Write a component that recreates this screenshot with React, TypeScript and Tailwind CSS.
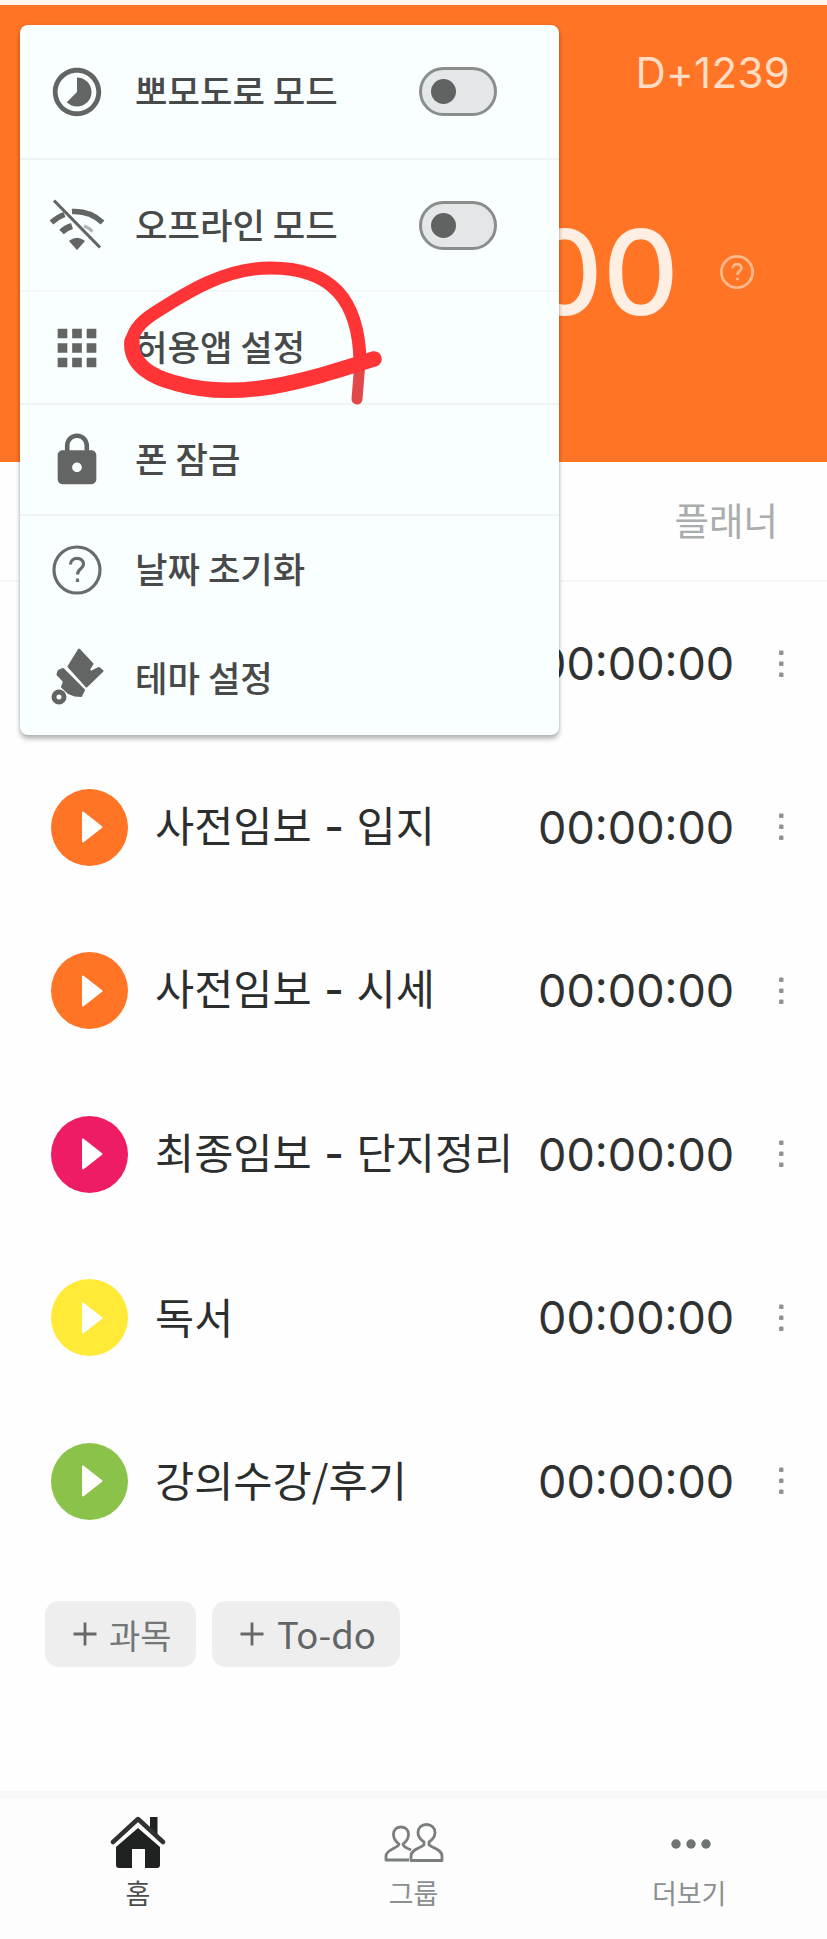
import React from "react";
import { MdApps, MdLock, MdTimelapse } from "react-icons/md";

const KR = "font-['Noto_Sans_CJK_KR',sans-serif]";
const NUM = "font-['Inter',sans-serif]";

const subjects = [
  { name: "", color: "bg-[#ff7425]" },
  { name: "사전임보 - 입지", color: "bg-[#ff7425]" },
  { name: "사전임보 - 시세", color: "bg-[#ff7425]" },
  { name: "최종임보 - 단지정리", color: "bg-[#ed1c64]" },
  { name: "독서", color: "bg-[#ffeb37]" },
  { name: "강의수강/후기", color: "bg-[#8bc24a]" },
];

function WifiOff() {
  return (
    <svg width="56" height="52" viewBox="0 0 56 52" fill="none" stroke="#636565">
      <path d="M2.500 23.500 Q8.500 18 15.500 15.500" strokeWidth="5.500" />
      <path d="M23 12.500 Q41 11.500 53.500 23.500" strokeWidth="5.500" />
      <path d="M12.500 33 Q16.500 29 23 27" strokeWidth="6.500" />
      <path d="M35 27 Q40 28.500 43.500 32.500" strokeWidth="3" opacity=".5" />
      <path d="M21 42 Q28 37 35 42 L28 50 Z" fill="#636565" strokeWidth="1.500" strokeLinejoin="round" />
      <path d="M5 1.500 L51 48.500" strokeWidth="3.200" />
    </svg>
  );
}

function Brush() {
  return (
    <svg width="56" height="58" viewBox="0 0 56 58" fill="#636565" stroke="#636565" strokeWidth="2" strokeLinejoin="round" className="relative -top-[2px]">
      <path d="M30 2.500 L43.500 17 L40 22.500 L42 25 L50 21 L53.500 24 L37.500 39.500 L19.500 19.500 Z" />
      <path d="M9.500 24 L14 22 L35 43 L32 49 L26 48.500 L19.500 46 L13 40 L15 34.500 L8.500 27.500 Z" />
      <circle cx="10" cy="50" r="5" fill="none" strokeWidth="5" />
    </svg>
  );
}

function Help({ size, stroke, className }: { size: number; stroke: number; className: string }) {
  return (
    <svg width={size} height={size} viewBox="0 0 50 50" fill="none" stroke="currentColor" strokeWidth={stroke} className={className}>
      <circle cx="25" cy="25" r="23" />
      <path d="M18.500 19.500 C18.500 11.500 31.500 11.500 31.500 19 C31.500 24 25.500 23.500 25.500 29.500" />
      <path d="M25.500 33.500 V37" />
    </svg>
  );
}

function Toggle() {
  return (
    <div className="mr-[62px] flex h-[49px] w-[78px] items-center rounded-full border-[3px] border-[#8b8d8d] bg-[#e4e7e7] pl-[9px]">
      <div className="size-[25px] rounded-full bg-[#616262]" />
    </div>
  );
}

function MenuRow({ icon, label, toggle, className }: { icon: React.ReactNode; label: string; toggle?: boolean; className: string }) {
  return (
    <div className={`flex items-center ${className}`}>
      <div className="ml-[20px] flex w-[74px] justify-center">{icon}</div>
      <div className="mb-[3px] ml-[21px] flex-1 whitespace-nowrap text-[35.300px] font-medium leading-none text-[#484a4a]">{label}</div>
      {toggle && <Toggle />}
    </div>
  );
}

function Menu() {
  return (
    <div className="absolute left-[20px] top-[25px] flex h-[710px] w-[539px] flex-col rounded-[8px] bg-[#f9fefe] shadow-[0_4px_5px_rgba(0,0,0,0.28),0_0_3px_rgba(0,0,0,0.12)]">
      <MenuRow icon={<MdTimelapse size={58} color="#636565" />} label="뽀모도로 모드" toggle className="h-[135px] border-b-2 border-[#f0f3f4]" />
      <MenuRow icon={<WifiOff />} label="오프라인 모드" toggle className="h-[132px] border-b-2 border-[#f4f7f8]" />
      <MenuRow icon={<MdApps size={58} color="#636565" />} label="허용앱 설정" className="h-[113px] border-b-2 border-[#f0f3f4]" />
      <MenuRow icon={<MdLock size={58} color="#636565" />} label="폰 잠금" className="h-[111px] border-b-2 border-[#f0f3f4]" />
      <MenuRow icon={<Help size={50} stroke={3.2} className="text-[#6a6c6c]" />} label="날짜 초기화" className="h-[107px]" />
      <MenuRow icon={<Brush />} label="테마 설정" className="h-[110px]" />
    </div>
  );
}

function Scribble() {
  return (
    <svg className="absolute left-[110px] top-[250px]" width="290" height="170" viewBox="110 250 290 170" fill="none" stroke="#ff3437" strokeLinecap="round" strokeLinejoin="round">
      <path d="M357 399 L360 362" stroke="#e2474a" strokeWidth="11" />
      <path d="M360 362 C359 300 332 268 270 268 C225 268 187 292 153 314 C125 332 126 356 146 371" strokeWidth="13" />
      <path d="M132 341 C130 365 152 377 175 383 C240 402 305 381 374 359" strokeWidth="15.500" />
    </svg>
  );
}

function Play({ color }: { color: string }) {
  return (
    <div className={`flex size-[77px] shrink-0 items-center justify-center rounded-full ${color}`}>
      <svg width="25" height="36" viewBox="0 0 25 36" className="ml-[6px]">
        <path d="M3 3.500 L21.500 18 L3 32.500 Z" fill="#fff" stroke="#fff" strokeWidth="2" strokeLinejoin="round" />
      </svg>
    </div>
  );
}

function SubjectRow({ name, color }: { name: string; color: string }) {
  return (
    <div className="flex h-[163.500px] items-center pl-[51px]">
      <Play color={color} />
      <div className="mb-[3px] ml-[27px] w-[383px] whitespace-nowrap text-[42.600px] leading-none text-[#2c2e2e] [word-spacing:3px]">
        {name.split("-").map((part, i) => (
          <React.Fragment key={i}>
            {i > 0 && <span className={`font-medium ${NUM}`}>-</span>}
            {part}
          </React.Fragment>
        ))}
      </div>
      <div className={`w-[243px] whitespace-nowrap text-[45px] leading-none text-[#303232] ${NUM}`}>00:00:00</div>
      <svg width="5" height="28" viewBox="0 0 5 28" className="-ml-[2px]" fill="#909393">
        <rect x="0" y="0.500" width="4.500" height="4.500" rx="1" />
        <rect x="0" y="11.500" width="4.500" height="4.500" rx="1" />
        <rect x="0" y="22.500" width="4.500" height="4.500" rx="1" />
      </svg>
    </div>
  );
}

function Plus() {
  return (
    <svg width="24" height="24" viewBox="0 0 24 24" stroke="#666868" strokeWidth="2.800">
      <path d="M0.500 12 H23.500 M12 0.500 V23.500" />
    </svg>
  );
}

function House() {
  return (
    <svg width="56" height="54" viewBox="0 0 56 54" fill="#202222">
      <path d="M40 2 H47.500 V20 L40 13 Z" />
      <path d="M3 27 L28 4 L53 27" fill="none" stroke="#303232" strokeWidth="4.500" strokeLinejoin="round" strokeLinecap="round" />
      <path d="M28 13 L50 32 V50 Q50 53 47 53 H35 V34 H22 V53 H9 Q6 53 6 50 V32 Z" />
    </svg>
  );
}

function Group() {
  return (
    <svg width="60" height="42" viewBox="0 0 60 42" fill="none" stroke="#7b7e7e" strokeWidth="2.800" strokeLinejoin="round" className="mt-[3px]">
      <path d="M27 27 C24 25 19 24.500 19 21 C23 18 24.500 15 24.500 11.500 C24.500 6.500 21 4 17 4 C13 4 9.500 6.500 9.500 11.500 C9.500 15 11 18 15 21 C15 25 2 26 2 33 V37 H25" />
      <path d="M42.500 1.500 C47.500 1.500 51 5 51 9.500 C51 14 48 17 45 19 V21.500 C47 25 58 26 58 33 V37.500 H27 V33 C27 26 38 25 40 21.500 V19 C37 17 34 14 34 9.500 C34 5 37.500 1.500 42.500 1.500 Z" />
    </svg>
  );
}

function NavItem({ icon, label, className }: { icon: React.ReactNode; label: string; className: string }) {
  return (
    <div className="flex flex-1 flex-col items-center">
      <div className="mt-[14px] flex h-[58px] items-center">{icon}</div>
      <div className={`mt-[8px] text-[27px] leading-none ${className}`}>{label}</div>
    </div>
  );
}

export default function App() {
  return (
    <div className={`relative flex h-[1939px] w-[827px] flex-col overflow-hidden bg-[#fefefe] ${KR}`}>
      <header className="flex h-[462px] flex-col items-end border-t-[5px] border-[#fff5ea] bg-[#ff7425]">
        <div className={`mr-[37px] mt-[47px] text-[42px] leading-none tracking-[0.300px] text-[#ffdcc4] ${NUM}`}>D+1239</div>
        <div className="mr-[73px] mt-[119px] flex items-center">
          <div className={`text-[118px] font-medium leading-none text-[#ffeee2] ${NUM}`}>00</div>
          <Help size={34} stroke={4} className="ml-[41px] text-[#ffb98c]" />
        </div>
      </header>
      <nav className="flex h-[120px] items-center justify-end border-b-2 border-[#f5f6f6] pb-[5px] pr-[49px] text-[37.500px] leading-none text-[#aaadad]">플래너</nav>
      <main className="h-[981px] shrink-0">
        {subjects.map((s, i) => (
          <SubjectRow key={i} {...s} />
        ))}
      </main>
      <div className="mt-[38px] flex shrink-0 gap-[16px] pl-[45px]">
        <button className="flex h-[66px] w-[151px] items-center rounded-[14px] bg-[#eeeeee] pl-[28px] text-[34px] leading-none text-[#747777]">
          <Plus />
          <span className="ml-[12px] mt-[1px]">과목</span>
        </button>
        <button className="flex h-[66px] w-[188px] items-center rounded-[14px] bg-[#eeeeee] pl-[28px] text-[36.500px] leading-none text-[#626565]">
          <Plus />
          <span className="ml-[13px] mt-[1px]">To-do</span>
        </button>
      </div>
      <footer className="mt-auto flex h-[148px] shrink-0 border-t-[8px] border-[#f8f8f8] bg-[#fdfdfd]">
        <NavItem icon={<House />} label="홈" className="text-[#4c4e4e]" />
        <NavItem icon={<Group />} label="그룹" className="text-[#8c8f8f]" />
        <NavItem
          icon={
            <svg width="40" height="10" viewBox="0 0 40 10" fill="#717474" className="ml-[4px] mt-[4px]">
              <circle cx="5" cy="5" r="4.700" />
              <circle cx="20" cy="5" r="4.700" />
              <circle cx="35" cy="5" r="4.700" />
            </svg>
          }
          label="더보기"
          className="text-[#8c8f8f]"
        />
      </footer>
      <Menu />
      <Scribble />
    </div>
  );
}
